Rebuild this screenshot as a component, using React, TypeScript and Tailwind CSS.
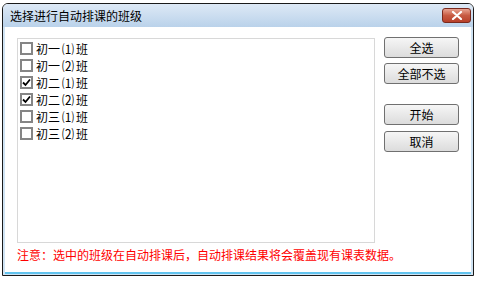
import { useState } from 'react'

const classes = [
  { id: 'c11', grade: '初一', no: '⑴', checked: false },
  { id: 'c12', grade: '初一', no: '⑵', checked: false },
  { id: 'c21', grade: '初二', no: '⑴', checked: true },
  { id: 'c22', grade: '初二', no: '⑵', checked: true },
  { id: 'c31', grade: '初三', no: '⑴', checked: false },
  { id: 'c32', grade: '初三', no: '⑵', checked: false },
]

function Check({ on }: { on: boolean }) {
  return (
    <div className="w-[13px] h-[13px] border-2 border-[#858585] bg-white flex items-center justify-center flex-shrink-0">
      {on && (
        <svg width="9" height="9" viewBox="0 0 9 9">
          <path d="M1 4.5 L3.5 7 L8 1.5" stroke="#000" strokeWidth="1.8" fill="none" />
        </svg>
      )}
    </div>
  )
}

function Btn({ label, className = '' }: { label: string; className?: string }) {
  return (
    <button
      className={`w-[75px] h-[21px] rounded-[3px] border border-[#707070] bg-gradient-to-b from-[#f6f6f6] to-[#dcdcdc] text-[12px] text-black leading-none flex items-center justify-center ${className}`}
    >
      {label}
    </button>
  )
}

export default function App() {
  const [items, setItems] = useState(classes)

  const toggle = (id: string) =>
    setItems(prev => prev.map(i => (i.id === id ? { ...i, checked: !i.checked } : i)))

  return (
    <div
      className="w-[477px] h-[281px] bg-white pt-[3px] pl-[2px]"
      style={{ fontFamily: '"Noto Sans CJK SC", sans-serif' }}
    >
      <div className="w-[472px] h-[273px] border border-[#1a1a1a] rounded-t-[6px] flex flex-col overflow-hidden">
        {/* Title bar */}
        <div className="h-[23px] bg-gradient-to-b from-[#dde9f6] to-[#bad2ea] flex items-center justify-between pl-[7px] pr-[2px]">
          <span className="text-[12px] text-black leading-none">选择进行自动排课的班级</span>
          <div className="w-[29px] h-[15px] rounded-[3px] border border-[#7a2a1e] bg-gradient-to-b from-[#e8a493] via-[#c75a42] to-[#b8402a] flex items-center justify-center">
            <svg width="12" height="9" viewBox="0 0 12 9">
              <path d="M2 1 L10 8 M10 1 L2 8" stroke="#fff" strokeWidth="2.2" strokeLinecap="round" />
            </svg>
          </div>
        </div>

        {/* Body */}
        <div className="flex-1 bg-[#cfe3f3] px-[2px] pb-[1px] flex flex-col">
          <div className="flex-1 bg-white border-b-2 border-[#62c3ee] pt-[11px] pl-[12px] flex flex-col">
            <div className="flex">
              <div className="w-[358px] h-[205px] border border-[#d8d8d8] pt-[1px] pl-[2px] flex flex-col">
                {items.map(i => (
                  <div
                    key={i.id}
                    onClick={() => toggle(i.id)}
                    className="h-[17px] flex items-center gap-[3px] cursor-default"
                  >
                    <Check on={i.checked} />
                    <span className="text-[12px] text-black leading-none flex items-center">
                      {i.grade}
                      <span className="ml-[2px] mr-[2px]">{i.no}</span>班
                    </span>
                  </div>
                ))}
              </div>
              <div className="ml-[9px] -mt-[1px] flex flex-col">
                <Btn label="全选" />
                <Btn label="全部不选" className="mt-[5px]" />
                <Btn label="开始" className="mt-[20px]" />
                <Btn label="取消" className="mt-[6px]" />
              </div>
            </div>
            <p className="mt-[5px] text-[12px] leading-[14px] text-[#ff0000]">
              注意：选中的班级在自动排课后，自动排课结果将会覆盖现有课表数据。
            </p>
          </div>
        </div>
      </div>
    </div>
  )
}
